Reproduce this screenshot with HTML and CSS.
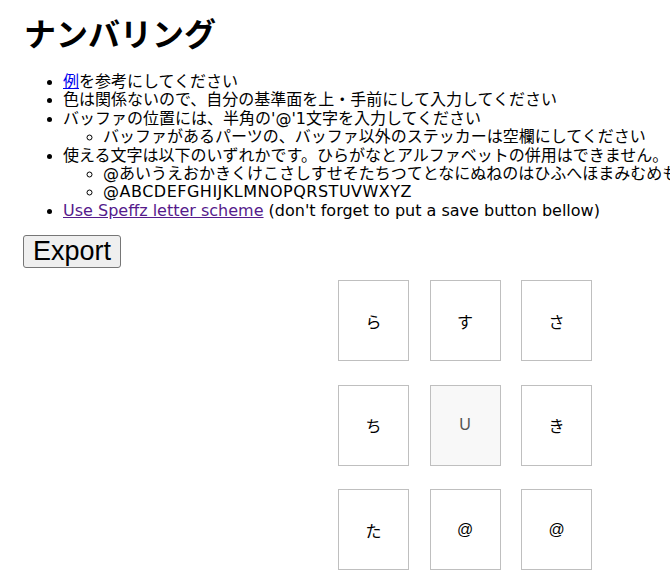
FILE: index.html
```html
<!DOCTYPE html>
<html lang="ja">
<head>
<meta charset="utf-8">
<title>ナンバリング</title>
<link rel="stylesheet" href="styles.css">
</head>
<body>
<div class="page">
  <h1 class="title">ナンバリング</h1>
  <ul class="notes">
    <li><a class="link" href="#example">例</a>を参考にしてください</li>
    <li>色は関係ないので、自分の基準面を上・手前にして入力してください</li>
    <li>バッファの位置には、半角の'@'1文字を入力してください
      <ul class="sub">
        <li>バッファがあるパーツの、バッファ以外のステッカーは空欄にしてください</li>
      </ul>
    </li>
    <li>使える文字は以下のいずれかです。ひらがなとアルファベットの併用はできません。
      <ul class="sub">
        <li>@あいうえおかきくけこさしすせそたちつてとなにぬねのはひふへほまみむめも</li>
        <li class="caps">@ABCDEFGHIJKLMNOPQRSTUVWXYZ</li>
      </ul>
    </li>
    <li><a class="link visited" href="#speffz">Use Speffz letter scheme</a> (don't forget to put a save button bellow)</li>
  </ul>
  <button class="export" type="button">Export</button>
  <div class="net">
    <div class="face face-u">
      <input class="cell" type="text" value="ら">
      <input class="cell" type="text" value="す">
      <input class="cell" type="text" value="さ">
      <input class="cell" type="text" value="ち">
      <input class="cell center" type="text" value="U" readonly>
      <input class="cell" type="text" value="き">
      <input class="cell" type="text" value="た">
      <input class="cell" type="text" value="@">
      <input class="cell" type="text" value="@">
    </div>
  </div>
</div>
</body>
</html>
```

FILE: styles.css
```css
html, body {
  margin: 0;
  overflow: hidden;
  background: #fff;
}
body {
  font-family: "DejaVu Sans", "Noto Sans CJK JP", sans-serif;
  font-size: 16px;
  color: #000;
}
.page {
  padding: 12px 0 0 23px;
}
.title {
  font-family: "Noto Sans CJK JP", sans-serif;
  font-size: 32px;
  line-height: 40px;
  font-weight: bold;
  margin: 0 0 21px;
  padding-left: 1px;
}
.notes {
  margin: 0 0 15px;
  padding-left: 40px;
  line-height: 18.4px;
  white-space: nowrap;
}
.notes li::marker {
  font-family: "Liberation Sans", sans-serif;
}
.sub {
  margin: 0;
  padding-left: 40px;
  list-style-type: circle;
}
.caps {
  letter-spacing: 0.5px;
}
.link {
  color: #0000ee;
  text-decoration: underline;
}
.link.visited {
  color: #551a8b;
}
.export {
  display: block;
  margin: 0;
  font-family: "Liberation Sans", sans-serif;
  font-size: 27px;
  line-height: 31px;
  height: 33px;
  padding: 0 9px;
  border: 1px solid #767676;
  border-radius: 3px;
  background: #efefef;
  color: #000;
}
.net {
  margin-top: 12px;
  display: grid;
  grid-template-columns: 254px 254px;
  column-gap: 61px;
}
.face {
  grid-column: 2;
  display: grid;
  grid-template-columns: repeat(3, 71px);
  grid-auto-rows: 81px;
  column-gap: 20.5px;
  row-gap: 23.5px;
}
.cell {
  box-sizing: border-box;
  width: 71px;
  height: 81px;
  margin: 0;
  padding: 0;
  border: 1px solid #bfbfbf;
  background: #fff;
  text-align: center;
  font-family: "Liberation Sans", "Noto Sans CJK JP", sans-serif;
  font-size: 16px;
  color: #000;
  outline: none;
}
.cell.center {
  background: #f8f8f8;
  color: #555;
}
```
